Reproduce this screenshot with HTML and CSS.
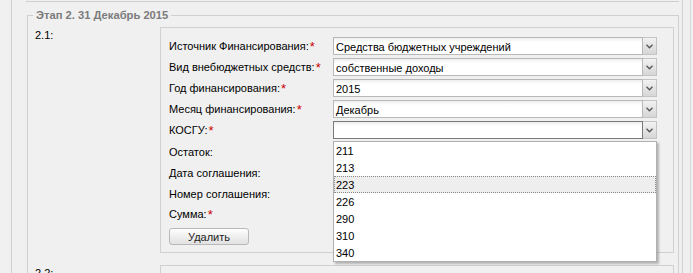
FILE: index.html
```html
<!doctype html>
<html>
<head>
<meta charset="utf-8">
<title>Этап 2</title>
<link rel="stylesheet" href="styles.css">
</head>
<body>
<div class="page">
  <div class="wrap">
    <div class="prev"></div>
    <fieldset class="stage">
      <legend>Этап 2. 31 Декабрь 2015</legend>
      <div class="item">
        <div class="num">2.1:</div>
        <div class="box">
          <div class="row">
            <label>Источник Финансирования:<b>*</b></label>
            <div class="combo"><span class="val">Средства бюджетных учреждений</span><span class="trig"><svg width="7" height="5" viewBox="0 0 7 5"><path d="M0.5 0.8 L3.5 3.8 L6.5 0.8" fill="none" stroke="#555" stroke-width="1.3"/></svg></span></div>
          </div>
          <div class="row">
            <label>Вид внебюджетных средств:<b>*</b></label>
            <div class="combo"><span class="val">собственные доходы</span><span class="trig"><svg width="7" height="5" viewBox="0 0 7 5"><path d="M0.5 0.8 L3.5 3.8 L6.5 0.8" fill="none" stroke="#555" stroke-width="1.3"/></svg></span></div>
          </div>
          <div class="row">
            <label>Год финансирования:<b>*</b></label>
            <div class="combo"><span class="val">2015</span><span class="trig"><svg width="7" height="5" viewBox="0 0 7 5"><path d="M0.5 0.8 L3.5 3.8 L6.5 0.8" fill="none" stroke="#555" stroke-width="1.3"/></svg></span></div>
          </div>
          <div class="row">
            <label>Месяц финансирования:<b>*</b></label>
            <div class="combo"><span class="val">Декабрь</span><span class="trig"><svg width="7" height="5" viewBox="0 0 7 5"><path d="M0.5 0.8 L3.5 3.8 L6.5 0.8" fill="none" stroke="#555" stroke-width="1.3"/></svg></span></div>
          </div>
          <div class="row">
            <label>КОСГУ:<b>*</b></label>
            <div class="combo focus"><span class="val"></span><span class="trig"><svg width="7" height="5" viewBox="0 0 7 5"><path d="M0.5 0.8 L3.5 3.8 L6.5 0.8" fill="none" stroke="#555" stroke-width="1.3"/></svg></span>
              <ul class="list">
                <li>211</li>
                <li>213</li>
                <li class="sel">223</li>
                <li>226</li>
                <li>290</li>
                <li>310</li>
                <li>340</li>
              </ul>
            </div>
          </div>
          <div class="row"><label>Остаток:</label></div>
          <div class="row"><label>Дата соглашения:</label></div>
          <div class="row"><label>Номер соглашения:</label></div>
          <div class="row"><label>Сумма:<b>*</b></label></div>
          <div class="actions"><button class="btn">Удалить</button></div>
        </div>
      </div>
      <div class="item">
        <div class="num">2.2:</div>
        <div class="box empty"></div>
      </div>
    </fieldset>
  </div>
</div>
</body>
</html>
```

FILE: styles.css
```css
*{
    padding: 0px;
    margin: 0px;
    box-sizing: border-box;
}
body{
    background-color: #f0f0f0;
    font-family: "Liberation Sans", Arial, sans-serif;
    font-size: 11px;
    color: #000;
    overflow: hidden;
}
.page{
    width: 691px;
    border-right: 1px solid #d6d6d6;
    height: 273px;
}
.wrap{
    margin-left: 11px;
    width: 672px;
    height: 273px;
    border-left: 1px solid #d0d0d0;
    border-right: 1px solid #d0d0d0;
}
.prev{
    height: 2px;
    margin-left: 14px;
    margin-right: 3px;
    border-bottom: 1px solid #cfcfcf;
}
.stage{
    margin: 7px 3px 0px 15px;
    border: 1px solid #d0d0d0;
    border-bottom: none;
    padding: 5px 4px 0px 7px;
    min-width: 0;
}
.stage legend{
    margin-left: -2px;
    padding: 0px 3px;
    font-weight: bold;
    font-size: 11.2px;
    color: #7b7b7b;
    line-height: 13px;
}
.item{
    display: flex;
    margin-bottom: 12px;
}
.num{
    width: 125px;
    padding-top: 2px;
    line-height: 13px;
}
.box{
    flex: 1;
    border: 1px solid #d0d0d0;
    padding: 9px 16px 7px 8px;
    display: flex;
    flex-direction: column;
    gap: 3px;
}
.box.empty{
    height: 40px;
}
.row{
    display: flex;
    height: 18px;
    align-items: center;
}
.row label{
    width: 164px;
    padding-top: 1px;
}
.row label b{
    color: #cc0000;
    font-weight: normal;
    font-size: 13px;
    margin-left: 1px;
    vertical-align: -1px;
}
.combo{
    position: relative;
    display: flex;
    width: 324px;
    height: 18px;
}
.combo .val{
    flex: 1;
    height: 18px;
    border: 1px solid #b8b8b8;
    background: linear-gradient(#eeeeee, #ffffff 4px);
    padding-left: 2px;
    padding-top: 1px;
    line-height: 16px;
}
.combo.focus .val{
    border-color: #7a7a7a;
}
.trig{
    width: 14px;
    height: 18px;
    background: linear-gradient(#f2f2f2, #d6d6d6);
    border: 1px solid #c4c4c4;
    border-left: none;
    display: flex;
    align-items: center;
    justify-content: center;
}
.list{
    position: absolute;
    left: 0px;
    top: 20px;
    width: 324px;
    list-style: none;
    background-color: #fff;
    border: 1px solid #b0b0b0;
    box-shadow: 2px 2px 2px rgba(0,0,0,0.25);
    z-index: 5;
}
.list li{
    height: 17px;
    line-height: 16px;
    padding-left: 1px;
    border: 1px solid transparent;
}
.list li.sel{
    background-color: #eeeeee;
    border: 1px dotted #8a8a8a;
}
.actions{
    padding-top: 2px;
}
.btn{
    width: 80px;
    height: 17px;
    font-family: "Liberation Sans", Arial, sans-serif;
    font-size: 11px;
    color: #222;
    border: 1px solid #b9b9b9;
    border-radius: 3px;
    background: linear-gradient(#ffffff, #ececec 60%, #e2e2e2);
}
```
